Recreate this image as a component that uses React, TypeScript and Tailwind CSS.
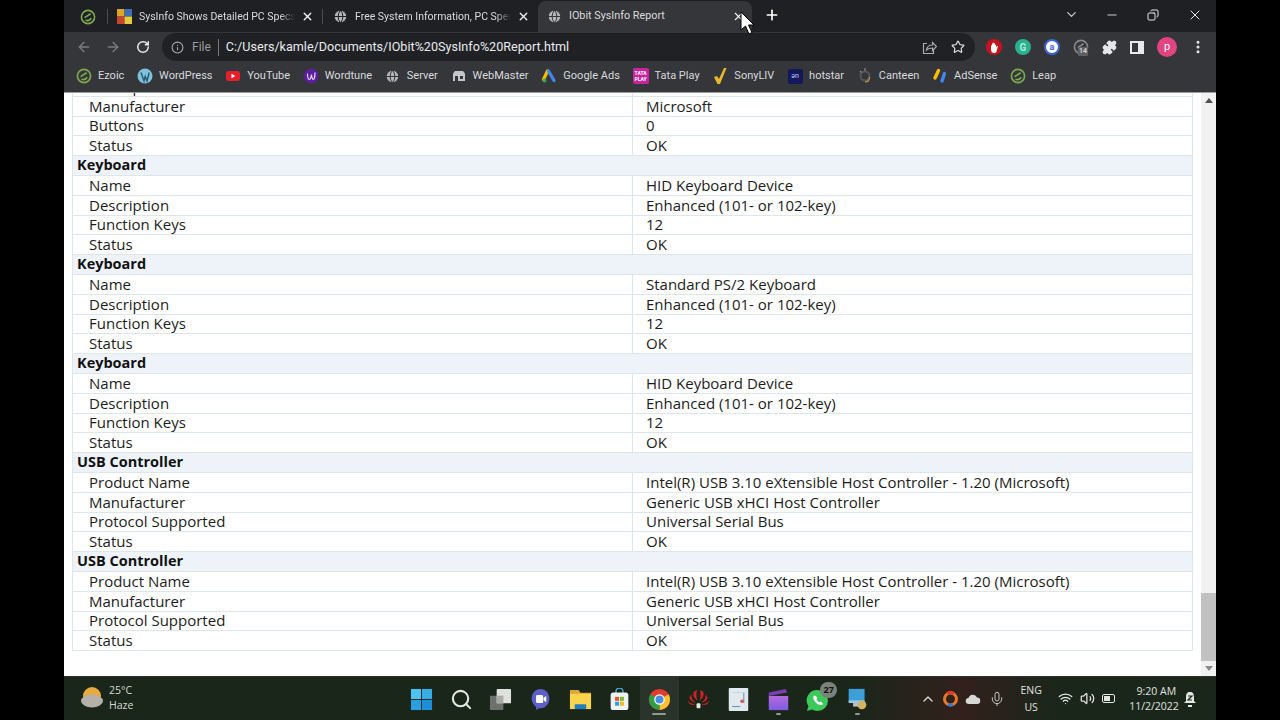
import { ArrowLeft, ArrowRight, ChevronDown, ChevronUp, Copy, Globe, Info, Mic, Minus, MoreVertical, Plus, Puzzle, RotateCw, Search, Star, Volume2, Wifi, X } from 'lucide-react'
import type { ReactNode } from 'react'

const sections: { title?: string; rows: [string, string][] }[] = [
  { rows: [['Description', 'Microsoft PS/2 Mouse'], ['Manufacturer', 'Microsoft'], ['Buttons', '0'], ['Status', 'OK']] },
  { title: 'Keyboard', rows: [['Name', 'HID Keyboard Device'], ['Description', 'Enhanced (101- or 102-key)'], ['Function Keys', '12'], ['Status', 'OK']] },
  { title: 'Keyboard', rows: [['Name', 'Standard PS/2 Keyboard'], ['Description', 'Enhanced (101- or 102-key)'], ['Function Keys', '12'], ['Status', 'OK']] },
  { title: 'Keyboard', rows: [['Name', 'HID Keyboard Device'], ['Description', 'Enhanced (101- or 102-key)'], ['Function Keys', '12'], ['Status', 'OK']] },
  { title: 'USB Controller', rows: [['Product Name', 'Intel(R) USB 3.10 eXtensible Host Controller - 1.20 (Microsoft)'], ['Manufacturer', 'Generic USB xHCI Host Controller'], ['Protocol Supported', 'Universal Serial Bus'], ['Status', 'OK']] },
  { title: 'USB Controller', rows: [['Product Name', 'Intel(R) USB 3.10 eXtensible Host Controller - 1.20 (Microsoft)'], ['Manufacturer', 'Generic USB xHCI Host Controller'], ['Protocol Supported', 'Universal Serial Bus'], ['Status', 'OK']] },
]

function EzoicIcon({ color = '#7fa94f' }: { color?: string }) {
  return (
    <svg width="16" height="16" viewBox="0 0 16 16" fill="none" stroke={color} strokeWidth="1.6">
      <circle cx="8" cy="8" r="6.6" />
      <path d="M4.6 8.6 10.6 4.8M5.4 11.2c2.2.8 4.4.2 5.8-2" />
    </svg>
  )
}

const bookmarks: { label: string; icon: ReactNode }[] = [
  { label: 'Ezoic', icon: <EzoicIcon /> },
  { label: 'WordPress', icon: <svg width="16" height="16" viewBox="0 0 16 16"><circle cx="8" cy="8" r="7.5" fill="#7fc1dc" /><path d="M4 4.5l3 8.5 1.200-4.500L10 13l2.200-8.500" fill="none" stroke="#27566f" strokeWidth="1.4" /></svg> },
  { label: 'YouTube', icon: <svg width="16" height="16" viewBox="0 0 16 16"><rect x="1" y="3" width="14" height="10" rx="2.5" fill="#e5202a" /><path d="M6.500 5.800v4.400L10.300 8z" fill="#fff" /></svg> },
  { label: 'Wordtune', icon: <svg width="16" height="16" viewBox="0 0 16 16"><circle cx="8" cy="8" r="7.5" fill="#5a1f9a" /><path d="M4.500 5.500c0 4 1 6 2 6s2-4 2-5c0 2 .8 5 1.800 5s1.700-4 1.700-7" fill="none" stroke="#e8d6ff" strokeWidth="1.2" /></svg> },
  { label: 'Server', icon: <Globe size={15} color="#35363a" fill="#b5b7ba" strokeWidth={1.6} /> },
  { label: 'WebMaster', icon: <svg width="16" height="16" viewBox="0 0 16 16"><path d="M2 5.500 4 3h8l2 2.500V13H2z" fill="#c4c7ca" /><rect x="4" y="8" width="3" height="5" fill="#35363a" /><rect x="9" y="8" width="3" height="3" fill="#35363a" /></svg> },
  { label: 'Google Ads', icon: <svg width="16" height="16" viewBox="0 0 16 16"><path d="M6.500 3 2.500 11.500" stroke="#fbbc04" strokeWidth="3.2" strokeLinecap="round" /><path d="M7.500 3l5.500 9.500" stroke="#4285f4" strokeWidth="3.2" strokeLinecap="round" /><circle cx="3.5" cy="12.5" r="1.9" fill="#34a853" /></svg> },
  { label: 'Tata Play', icon: <div className="flex h-[16px] w-[16px] flex-col items-center justify-center rounded-[2px] bg-[#c9249f] text-[5px] font-bold leading-[6px] text-white"><span>TATA</span><span>PLAY</span></div> },
  { label: 'SonyLIV', icon: <svg width="16" height="18" viewBox="0 0 16 18"><path d="M2 10l3-1 2 3 5-11h2.500L8 17H5.500z" fill="#e9b92d" /></svg> },
  { label: 'hotstar', icon: <div className="flex h-[15px] w-[15px] items-center justify-center rounded-[2px] bg-[#14185a] text-[7px] leading-none text-[#c7d0ff]">ən</div> },
  { label: 'Canteen', icon: <svg width="16" height="18" viewBox="0 0 16 18" fill="none"><circle cx="8" cy="9" r="4.5" stroke="#55565a" strokeWidth="2" /><path d="M8 1v3M3 4l1.500 1.500" stroke="#8a8b8e" strokeWidth="1.2" /><path d="M12.500 10c0 3-1.500 5-4.500 5" stroke="#c89a3a" strokeWidth="1.2" /></svg> },
  { label: 'AdSense', icon: <svg width="16" height="16" viewBox="0 0 16 16"><path d="M6.500 2.500 3 10" stroke="#fbbc04" strokeWidth="3.4" strokeLinecap="round" /><path d="M12.500 5.500 10 13" stroke="#4285f4" strokeWidth="3.4" strokeLinecap="round" /></svg> },
  { label: 'Leap', icon: <EzoicIcon /> },
]

function Tab({ icon, title, className }: { icon: ReactNode; title: string; className: string }) {
  return (
    <div className={`flex h-full shrink-0 items-center ${className}`}>
      <span className="flex w-[16px] shrink-0 items-center justify-center">{icon}</span>
      <span className="ml-[7px] w-[156px] overflow-hidden whitespace-nowrap text-[10.5px] text-[#d8dadd] [mask-image:linear-gradient(to_right,black_90%,transparent)]">{title}</span>
      <X size={13} color="#f1f3f4" strokeWidth={2.5} className="ml-[6px] shrink-0" />
    </div>
  )
}

function TabStrip() {
  return (
    <div className="flex h-[32px] items-stretch bg-[#1f2023] pl-[16px] pt-[1px]">
      <div className="flex w-[19px] items-center"><EzoicIcon /></div>
      <div className="mx-[8px] my-[8px] w-px bg-[#4a4b4f]" />
      <Tab className="w-[206px]" title="SysInfo Shows Detailed PC Specs" icon={
        <svg width="15" height="15" viewBox="0 0 15 15"><rect width="7.5" height="7.5" fill="#e0a526" /><rect x="7.5" width="7.5" height="7.5" fill="#3d6fb4" /><rect y="7.5" width="7.5" height="7.5" fill="#c8452f" /><rect x="7.5" y="7.5" width="7.5" height="7.5" fill="#e9cc3c" /></svg>
      } />
      <div className="my-[8px] w-px bg-[#4a4b4f]" />
      <Tab className="w-[215px] pl-[9px]" title="Free System Information, PC Specs" icon={<Globe size={15} color="#1f2023" fill="#b5b7ba" strokeWidth={1.6} />} />
      <div className="flex w-[214px] shrink-0 items-center rounded-t-[8px] bg-[#35363a] pl-[9px]">
        <Globe size={15} color="#35363a" fill="#b5b7ba" strokeWidth={1.6} />
        <span className="ml-[7px] w-[163px] text-[10.8px] text-[#d8dadd]">IObit SysInfo Report</span>
        <X size={13} color="#f1f3f4" strokeWidth={2} />
      </div>
      <div className="ml-[12px] flex items-center pb-[3px]"><Plus size={16} color="#fff" strokeWidth={2.5} /></div>
      <div className="ml-auto flex items-center gap-[26px] pr-[13px] pb-[4px]">
        <ChevronDown size={15} color="#c9cbce" />
        <div className="flex items-center gap-[28px]">
          <Minus size={14} color="#c9cbce" />
          <Copy size={12} color="#e4e5e7" className="-scale-x-100" />
          <X size={16} color="#e8e9eb" strokeWidth={1.5} />
        </div>
      </div>
    </div>
  )
}

function Toolbar() {
  return (
    <div className="flex h-[30px] items-center bg-[#35363a]">
      <div className="flex w-[98px] items-center gap-[13px] pl-[12px]">
        <ArrowLeft size={16} color="#7b7d80" />
        <ArrowRight size={16} color="#7b7d80" />
        <RotateCw size={14} color="#e6e7e9" strokeWidth={2.6} className="ml-[2px]" />
      </div>
      <div className="flex h-[28px] w-[813px] items-center rounded-full bg-[#202124] pl-[9px]">
        <Info size={13} color="#a8aaad" />
        <span className="ml-[8px] text-[12px] text-[#9a9c9f]">File</span>
        <div className="ml-[7px] h-[17px] w-px bg-[#77797c]" />
        <span className="ml-[7px] text-[12.6px] text-[#e8eaed]">C:/Users/kamle/Documents/IObit%20SysInfo%20Report.html</span>
        <div className="ml-auto flex items-center gap-[14px] pr-[10px]">
          <svg width="15" height="15" viewBox="0 0 15 15" fill="none" stroke="#a8aaad" strokeWidth="1.2"><path d="M5 3.500H1.500v10h10V10" /><path d="M4.500 10c.5-3.500 3-5 6-5V2.500l4 4-4 4V8c-2.500 0-4.500.5-6 2z" /></svg>
          <Star size={14} color="#e0e1e3" strokeWidth={2} />
        </div>
      </div>
      <div className="ml-[11px] flex items-center gap-[13px]">
        <span className="flex h-[16px] w-[16px] items-center justify-center rounded-full bg-[#c8131c]"><svg width="9" height="11" viewBox="0 0 9 11" fill="#fff"><path d="M1 3.500c0-.8 1-.8 1 0V1.800c0-.8 1-.8 1 0V1c0-.8 1-.8 1 0v.5c0-.8 1-.8 1 0V3c0-.8 1-.8 1 0v2l1-1c.6-.5 1.200 0 .8.700L6.500 9.500c-.5 1-1.500 1.500-2.500 1.500-2 0-3-1.500-3-3.500z" /></svg></span>
        <span className="flex h-[16px] w-[16px] items-center justify-center rounded-full bg-[#2bb08f] text-[10px] font-bold text-[#a9ecd9]">G</span>
        <span className="flex h-[16px] w-[16px] items-center justify-center rounded-full border-2 border-[#3d63d8] bg-white text-[9px] font-bold leading-none text-[#3d63d8]">a</span>
        <span className="relative flex h-[16px] w-[16px] items-center justify-center">
          <EzoicIcon color="#86888b" />
          <span className="absolute left-[5px] top-[8px] rounded-[1px] bg-[#5f6063] px-[1px] text-[7px] font-bold leading-[9px] text-[#d0d1d3]">14</span>
        </span>
        <Puzzle size={15} color="#e6e7e9" fill="#e6e7e9" />
        <span className="h-[13px] w-[14px] border-2 border-r-[6px] border-[#e8e9eb]" />
        <span className="flex h-[20px] w-[20px] items-center justify-center rounded-full bg-[#e0457f] text-[11px] text-white">p</span>
        <MoreVertical size={16} color="#e6e7e9" strokeWidth={2.5} />
      </div>
    </div>
  )
}

function BookmarkBar() {
  return (
    <div className="flex h-[31px] items-center gap-[12.75px] border-b border-[#9b9d9f] bg-[#35363a] pl-[12px] pb-[2px]">
      {bookmarks.map((b) => (
        <div key={b.label} className="flex items-center gap-[6px]">
          <span className="flex w-[16px] items-center justify-center">{b.icon}</span>
          <span className="text-[11px] text-[#d8dadd]">{b.label}</span>
        </div>
      ))}
    </div>
  )
}

function Row({ label, value }: { label: string; value: string }) {
  return (
    <div className="grid h-[19.81px] grid-cols-[560px_1fr] items-center border-b border-[#dce6ec] text-[15px] leading-none text-[#1c1c1c]">
      <div className="flex h-full items-center border-r border-[#dce6ec] pl-[16px]">{label}</div>
      <div className="pl-[13px]">{value}</div>
    </div>
  )
}

function Report() {
  return (
    <div className="flex h-[583px] bg-white font-['Open_Sans',sans-serif]">
      <div className="flex-1 overflow-hidden px-[8px]">
        <div className="-mt-[16px] border-x border-[#dce6ec]">
          {sections.map((s, i) => (
            <div key={i}>
              {s.title && (
                <div className="flex h-[19.81px] items-center border-b border-[#dce6ec] bg-[#eef3f9] pl-[4px] text-[14.5px] font-bold leading-none text-[#111]">{s.title}</div>
              )}
              {s.rows.map(([label, value]) => <Row key={label} label={label} value={value} />)}
            </div>
          ))}
        </div>
      </div>
      <div className="relative flex w-[15px] flex-col items-center justify-between bg-[#f1f1f1] py-[5px]">
        <span className="h-0 w-0 border-x-[4px] border-b-[5px] border-x-transparent border-b-[#505050]" />
        <div className="absolute left-0 top-[500px] h-[68px] w-full bg-[#c1c1c1]" />
        <span className="h-0 w-0 border-x-[4px] border-t-[5px] border-x-transparent border-t-[#8a8a8a]" />
      </div>
    </div>
  )
}

const taskIcons: ReactNode[] = [
  <svg key="win" viewBox="0 0 24 24"><rect x="1" y="1" width="10.5" height="10.5" fill="#4fc3f0" /><rect x="12.5" y="1" width="10.5" height="10.5" fill="#35aee8" /><rect x="1" y="12.5" width="10.5" height="10.5" fill="#2a9fe0" /><rect x="12.5" y="12.5" width="10.5" height="10.5" fill="#1e8fd6" /></svg>,
  <Search key="search" color="#e4e7e4" strokeWidth={2.2} />,
  <svg key="view" viewBox="0 0 24 24"><rect x="1" y="8" width="14" height="15" rx="1" fill="#6e726e" /><rect x="8" y="1" width="15" height="15" rx="1" fill="#dfe1df" /><rect x="8" y="8" width="7" height="8" fill="#a9aba9" /></svg>,
  <svg key="teams" viewBox="0 0 24 26"><path d="M12 1c6 0 10 5 10 11s-4 11-10 11c-1.500 0-3 .5-5 2v-3.500C4 19.500 2 16 2 12 2 6 6 1 12 1z" fill="#5b5fc7" /><rect x="7" y="8" width="8" height="9" rx="1.5" fill="#fff" /><path d="M15.500 11l3-2v7l-3-2z" fill="#fff" /></svg>,
  <svg key="files" viewBox="0 0 24 24"><path d="M1 2h9l2 3h11v17H1z" fill="#d8a93a" /><rect x="1" y="6" width="22" height="16" fill="#fbd44e" /><rect x="6" y="17" width="12" height="5" rx="1" fill="#1f7fc4" /></svg>,
  <svg key="store" viewBox="0 0 24 26"><path d="M8 6V4a4 4 0 0 1 8 0v2" fill="none" stroke="#3fb1d8" strokeWidth="1.5" /><rect x="2" y="5" width="20" height="20" rx="3" fill="#eef2f2" /><rect x="7" y="10" width="4.5" height="4.5" fill="#e8542c" /><rect x="12.5" y="10" width="4.5" height="4.5" fill="#7eb92e" /><rect x="7" y="15.5" width="4.5" height="4.5" fill="#2f9fe0" /><rect x="12.5" y="15.5" width="4.5" height="4.5" fill="#f2b81f" /></svg>,
  <svg key="chrome" viewBox="0 0 24 24"><circle cx="12" cy="12" r="11" fill="#e33b2e" /><path d="M12 12 21.5 6.500A11 11 0 0 1 12 23z" fill="#fbc02d" /><path d="M12 12 12 23A11 11 0 0 1 2.500 6.500z" fill="#2f9e44" /><circle cx="12" cy="12" r="5.5" fill="#fff" /><circle cx="12" cy="12" r="4.2" fill="#4a90e2" /></svg>,
  <svg key="huawei" viewBox="0 0 24 24" fill="#d3202a"><path d="M10.500 2c-1 3-1 7 .5 11-4-2-5-6-4-9zM13.500 2c1 3 1 7-.5 11 4-2 5-6 4-9zM5 6c-1 3 0 7 4 9-3 0-6-2-6.500-5zM19 6c1 3 0 7-4 9 3 0 6-2 6.500-5zM1 13c2 3 5 4 8 3.500-2 2-5 1.500-7-.5zM23 13c-2 3-5 4-8 3.500 2 2 5 1.500 7-.5z" /><rect x="10" y="16" width="4" height="5" rx="1" fill="#e8e8e8" /></svg>,
  <svg key="notes" viewBox="0 0 22 26"><rect width="22" height="26" rx="1" fill="#dfe9ee" /><path d="M4 21h9M17 5v12" stroke="#3a5fa0" strokeWidth="0.8" /><circle cx="15" cy="15" r="2" fill="#d9534f" /><path d="M4 5h14" stroke="#c5d0d6" /></svg>,
  <svg key="clap" viewBox="0 0 24 26"><defs><linearGradient id="clap" x1="0" y1="0" x2="0" y2="1"><stop offset="0" stopColor="#b46be0" /><stop offset="1" stopColor="#7d5be0" /></linearGradient></defs><rect x="1" y="9" width="22" height="16" fill="url(#clap)" /><path d="M1 5 20 1l2 4-21 4z" fill="#7c3fb0" /></svg>,
  <div key="wa" className="relative h-[23px] w-[23px]"><svg viewBox="0 0 24 26"><path d="M12 2a11 11 0 0 1 0 22c-2 0-4-.5-5.500-1.500L1 24l1.500-5A11 11 0 0 1 12 2z" fill="#3cc85a" /><path d="M8 8c-1 2 0 5 2.500 7.500S16 18.500 18 17l-2.500-3-1.500 1c-1.500-.5-2.500-2-3-3l1-1.500L10 8z" fill="#fff" /></svg><span className="absolute -right-[8px] -top-[6px] flex h-[16px] w-[17px] items-center justify-center rounded-full bg-[#7b8279] text-[9px] font-bold text-[#101410]">27</span></div>,
  <svg key="mon" viewBox="0 0 24 26"><rect x="2" y="1" width="18" height="15" fill="#3d9fd8" /><rect x="2" y="14" width="18" height="3" fill="#9ec9e4" /><rect x="7" y="17" width="8" height="4" fill="#b9c2c8" /><circle cx="17" cy="19" r="5" fill="#d4b463" /></svg>,
]

function Taskbar() {
  return (
    <div className="flex h-[44px] items-center border-t border-[#2c352c] bg-[linear-gradient(90deg,#1a261a_0%,#1a261a_68%,#32201c_78%,#1a261a_86%)] font-['Open_Sans',sans-serif]">
      <div className="flex w-[338px] items-center pb-[2px] pl-[16px]">
        <svg width="24" height="24" viewBox="0 0 24 24"><circle cx="12" cy="10" r="9" fill="#e8a93e" /><ellipse cx="12" cy="15" rx="11" ry="6.5" fill="#b5b0a8" /></svg>
        <div className="ml-[5px] text-[10.5px] leading-[15px] text-[#d4d8d2]"><div>25°C</div><div>Haze</div></div>
      </div>
      <div className="flex h-full">
        {taskIcons.map((icon, i) => (
          <div key={i} className={`relative flex h-full w-[39.6px] items-center justify-center pt-[1px] [&>svg]:h-[23px] [&>svg]:w-[23px] ${i === 6 ? 'bg-[#2a342b]' : ''}`}>
            {icon}
            {i === 6 && <span className="absolute bottom-[5px] h-[2px] w-[14px] rounded-full bg-[#8f9a90]" />}
            {(i === 9 || i === 11) && <span className="absolute bottom-[5px] h-[2px] w-[5px] rounded-full bg-[#8f9a90]" />}
          </div>
        ))}
      </div>
      <div className="ml-[43px] flex items-center">
        <ChevronUp size={16} color="#d8dad8" />
        <svg className="ml-[7px]" width="15" height="18" viewBox="0 0 15 18"><circle cx="7.5" cy="9" r="6" fill="none" stroke="#e8782a" strokeWidth="3" /><path d="M4 3.500A6 6 0 0 1 11 3.500" stroke="#d63d2e" strokeWidth="3" fill="none" /><path d="M5 14.500a6 6 0 0 0 5 0" stroke="#2b7de0" strokeWidth="3" fill="none" /></svg>
        <svg className="ml-[7px]" width="16" height="12" viewBox="0 0 16 12"><path d="M4 11a3 3 0 0 1-.5-6A4.500 4.500 0 0 1 12 4.500a3 3 0 0 1 0 6.500z" fill="#d6d8d6" /></svg>
        <Mic size={16} color="#cfd2cf" strokeWidth={1.4} className="ml-[8px]" />
        <div className="ml-[9px] w-[34px] text-center text-[10.5px] leading-[17px] text-[#e0e2e0]"><div>ENG</div><div>US</div></div>
        <Wifi size={15} color="#e4e6e4" className="ml-[10px]" />
        <Volume2 size={15} color="#e4e6e4" className="ml-[7px]" />
        <span className="ml-[7px] flex h-[9px] w-[13px] items-center rounded-[2px] border border-[#e4e6e4] px-[1px]"><span className="h-[5px] w-[6px] bg-[#e4e6e4]" /></span>
        <div className="ml-[14px] w-[47px] whitespace-nowrap text-right text-[10.5px] leading-[15px] text-[#e0e2e0]"><div>9:20 AM</div><div>11/2/2022</div></div>
        <svg className="ml-[7px]" width="14" height="18" viewBox="0 0 14 18"><path d="M7 2c3 0 4 2 4 5v4l2 2H1l2-2V7c0-3 1-5 4-5z" fill="#e4e6e4" /><rect x="5" y="15" width="4" height="2" fill="#e4e6e4" /><path d="M5 6h4L5 10h4" fill="none" stroke="#1a261a" strokeWidth="1.2" /></svg>
      </div>
    </div>
  )
}

export default function App() {
  return (
    <div className="flex h-[720px] w-[1280px] justify-center overflow-hidden bg-black font-['Roboto',sans-serif]">
      <div className="relative w-[1152px]">
        <TabStrip />
        <Toolbar />
        <BookmarkBar />
        <Report />
        <Taskbar />
        <svg className="absolute left-[676px] top-[11px]" width="14" height="25" viewBox="0 0 14 25"><path d="M1 1v18l4.500-4 3.500 8 3-1.500-3.500-7.500H14z" fill="#fff" stroke="#000" strokeWidth="1" /></svg>
      </div>
    </div>
  )
}
